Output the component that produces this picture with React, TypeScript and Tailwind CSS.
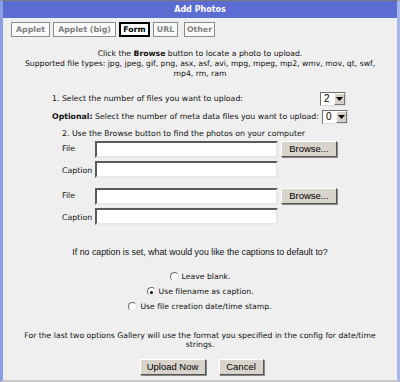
import React from "react";

const verdana = { fontFamily: '"DejaVu Sans", Verdana, sans-serif' };
const arial = { fontFamily: '"Liberation Sans", Arial, sans-serif' };

function Tab({ label, w, active }: { label: string; w: string; active?: boolean }) {
  return (
    <div
      className={
        active
          ? `flex h-[15px] ${w} items-center justify-center border-2 border-black bg-white text-[7.8px] font-bold text-black`
          : `flex h-[15px] ${w} items-center justify-center border border-[#8c8c8c] bg-[#fafafa] text-[7.8px] font-bold text-[#808080]`
      }
    >
      {label}
    </div>
  );
}

function Select({ value }: { value: string }) {
  return (
    <div className="flex h-[14px] w-[26px] items-stretch border border-t-[#6f6f6f] border-l-[#6f6f6f] border-b-[#dcdcdc] border-r-[#dcdcdc] bg-white">
      <span className="flex-1 pl-[3px] text-[10px] leading-[12px] text-black" style={arial}>
        {value}
      </span>
      <span className="flex w-[11px] items-center justify-center border border-t-white border-l-white border-b-[#777] border-r-[#777] bg-[#d4d0c8]">
        <svg width="7" height="4" viewBox="0 0 7 4">
          <path d="M0 0h7L3.5 4z" fill="#000" />
        </svg>
      </span>
    </div>
  );
}

function TextBox() {
  return (
    <div className="h-[17px] w-[183px] border-2 border-t-[#5a5a5a] border-l-[#5a5a5a] border-b-[#e8e8e8] border-r-[#e8e8e8] bg-white" />
  );
}

function Button({ label, w }: { label: string; w: string }) {
  return (
    <div
      className={`flex h-[16px] ${w} items-center justify-center border border-t-white border-l-white border-b-[#555] border-r-[#555] bg-[#d8d4cc] text-[9.5px] text-black shadow-[1px_1px_0_#888]`}
      style={arial}
    >
      {label}
    </div>
  );
}

function Radio({ checked }: { checked?: boolean }) {
  return (
    <span className="relative mr-[3px] inline-block h-[9px] w-[9px] rounded-full border border-t-[#6a6a6a] border-l-[#6a6a6a] border-b-[#e0e0e0] border-r-[#e0e0e0] bg-white">
      {checked && <span className="absolute left-[2.5px] top-[2.5px] h-[3px] w-[3px] rounded-full bg-black" />}
    </span>
  );
}

export default function App() {
  return (
    <div
      className="flex h-[382px] w-[400px] flex-col overflow-hidden border-t border-l-[3px] border-r-[3px] border-b-2 border-t-[#7a7a7a] border-l-[#8d9de6] border-r-[#a8b6ee] border-b-[#c8c8c8] bg-[#efefef] text-[#111]"
      style={verdana}
    >
      <div className="flex h-[17px] shrink-0 items-center justify-center bg-[#5b6cd2] text-[8px] font-bold text-white">
        Add Photos
      </div>

      <div className="mt-[4px] flex gap-[3px] pl-[8px]">
        <Tab label="Applet" w="w-[39px]" />
        <Tab label="Applet (big)" w="w-[63px]" />
        <Tab label="Form" w="w-[31px]" active />
        <Tab label="URL" w="w-[25px]" />
        <div className="ml-[3px]">
          <Tab label="Other" w="w-[31px]" />
        </div>
      </div>

      <div className="mt-[12px] text-center text-[7.7px] leading-[10px]">
        <p>
          Click the <b>Browse</b> button to locate a photo to upload.
        </p>
        <p className="px-[14px]">
          Supported file types: jpg, jpeg, gif, png, asx, asf, avi, mpg, mpeg, mp2, wmv, mov, qt, swf,
          mp4, rm, ram
        </p>
      </div>

      <div className="mt-[13px] flex flex-col text-[7.8px]">
        <div className="flex items-center pl-[49px]">
          <span className="w-[268px]">1. Select the number of files you want to upload:</span>
          <Select value="2" />
        </div>
        <div className="mt-[4px] flex items-center pl-[49px]">
          <span className="w-[270px]">
            <b>Optional:</b> Select the number of meta data files you want to upload:
          </span>
          <Select value="0" />
        </div>
        <p className="mt-[4px] pl-[59px]">2. Use the Browse button to find the photos on your computer</p>

        <div className="mt-[1px] flex flex-col gap-[3px] pl-[59px]">
          <div className="flex items-center">
            <span className="w-[33px]">File</span>
            <TextBox />
            <div className="ml-[3px]">
              <Button label="Browse..." w="w-[56px]" />
            </div>
          </div>
          <div className="flex items-end">
            <span className="w-[33px] pb-[1px]">Caption</span>
            <TextBox />
          </div>
          <div className="mt-[7px] flex items-center">
            <span className="w-[33px]">File</span>
            <TextBox />
            <div className="ml-[3px]">
              <Button label="Browse..." w="w-[56px]" />
            </div>
          </div>
          <div className="flex items-end">
            <span className="w-[33px] pb-[1px]">Caption</span>
            <TextBox />
          </div>
        </div>
      </div>

      <p className="mt-[21px] text-center text-[8.8px]" style={arial}>
        If no caption is set, what would you like the captions to default to?
      </p>

      <div className="mt-[12px] flex flex-col items-center gap-[3px] text-[7.7px]">
        <p className="flex h-[12px] items-center">
          <Radio /> Leave blank.
        </p>
        <p className="flex h-[12px] items-center">
          <Radio checked /> Use filename as caption.
        </p>
        <p className="flex h-[12px] items-center">
          <Radio /> Use file creation date/time stamp.
        </p>
      </div>

      <p className="mt-[18px] px-[16px] text-center text-[7.7px] leading-[9.5px]">
        For the last two options Gallery will use the format you specified in the config for date/time
        strings.
      </p>

      <div className="mt-[9px] flex justify-center gap-[13px] pl-[3px]">
        <Button label="Upload Now" w="w-[66px]" />
        <Button label="Cancel" w="w-[45px]" />
      </div>
    </div>
  );
}
